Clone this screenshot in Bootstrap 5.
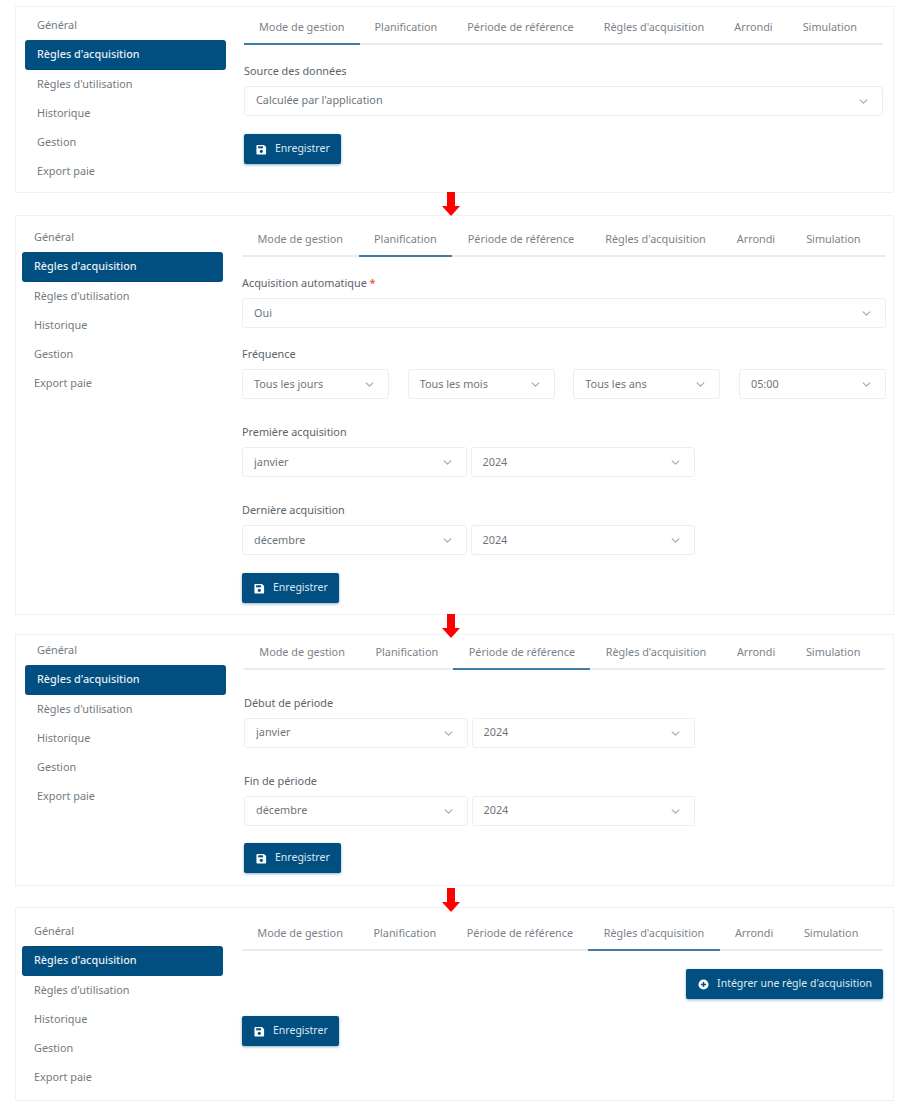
<!DOCTYPE html>
<html lang="fr">
<head>
  <meta charset="UTF-8" />
  <meta name="viewport" content="width=device-width, initial-scale=1" />
  <title>Règles d'acquisition</title>
  <link href="https://cdn.jsdelivr.net/npm/bootstrap@5.3.2/dist/css/bootstrap.min.css" rel="stylesheet" />
  <style>
    body {
      font-family: "Noto Sans", "Liberation Sans", sans-serif;
      font-size: 10.85px;
      color: #6c757d;
      background: #fff;
      padding: 6px 6px 0 15px;
    }

    .panneau {
      display: flex;
      width: 879px;
      border: 1px solid #f0f1f3;
      background: #fff;
    }

    .panneau-1 { padding: 4px 10px 5px 9px; height: 187px; }
    .panneau-2 { padding: 7px 7px 11px 6px; height: 400px; }
    .panneau-3 { padding: 1px 8px 12px 9px; height: 252px; }
    .panneau-4 { padding: 9px 10px 7px 6px; height: 194px; }

    .fleche {
      position: relative;
      z-index: 1;
      width: 879px;
      display: flex;
      justify-content: center;
      align-items: center;
      padding-right: 7px;
    }

    .fleche svg { flex: none; }
    .fleche-22 { height: 22px; padding-bottom: 1px; }
    .fleche-19 { height: 19px; padding-top: 2px; }
    .fleche-21 { height: 21px; padding-top: 6px; }

    .menu-lateral {
      flex: none;
      width: 201px;
      margin-right: 18px;
    }

    .panneau-2 .menu-lateral,
    .panneau-4 .menu-lateral { margin-right: 19px; }

    .menu-lateral .nav-link {
      height: 29.3px;
      line-height: 28.4px;
      padding: 0 12px;
      color: #727a82;
      font-size: 10.85px;
      border-radius: 3px;
    }

    .menu-lateral .nav-link.active {
      background: #014f80;
      color: #e8eef3;
      font-weight: 500;
    }

    .contenu { flex: 1; min-width: 0; }

    .onglets {
      border-bottom: 2px solid #e9ecef;
      flex-wrap: nowrap;
    }

    .onglets .nav-link {
      height: 34px;
      line-height: 32px;
      padding: 0 15.5px;
      margin-bottom: -2px;
      color: #7b828a;
      font-size: 10.85px;
      white-space: nowrap;
      border-bottom: 2px solid transparent;
    }

    .panneau-1 .onglets .nav-link { padding: 0 15px; }
    .panneau-3 .onglets .nav-link,
    .panneau-4 .onglets .nav-link { padding: 0 15.3px; }

    .onglets .nav-link.active {
      color: #7b828a;
      border-bottom-color: #3f7da8;
    }

    .champ-label {
      display: block;
      height: 18px;
      line-height: 18px;
      margin-bottom: 6px;
      color: #5b636b;
      font-size: 10.85px;
    }

    .requis { color: #e3342f; }

    .form-select.liste {
      height: 30px;
      padding: 0 30px 1px 11px;
      font-size: 10.85px;
      color: #6c757d;
      border: 1px solid #eceef1;
      border-radius: 3px;
      background-color: #fff;
      background-image: url("data:image/svg+xml,%3csvg xmlns='http://www.w3.org/2000/svg' viewBox='0 0 16 16'%3e%3cpath fill='none' stroke='%23a3a9af' stroke-linecap='round' stroke-linejoin='round' stroke-width='2' d='m2 5 6 6 6-6'/%3e%3c/svg%3e");
      background-position: right 14px center;
      background-size: 9px 9px;
    }

    .panneau-2 .form-select.liste { padding-bottom: 0; }
    .form-select.frequence { width: 147px; flex: none; }

    .groupe-date { width: 453px; }
    .panneau-3 .groupe-date { width: 451px; }

    .bouton-bleu {
      display: inline-flex;
      align-items: center;
      height: 30px;
      padding: 0 11px 0 12px;
      gap: 8px;
      background: #014f80;
      border: 0;
      border-radius: 2px;
      color: #dfe8ef;
      font-size: 10.5px;
      box-shadow: 0 1px 3px rgba(1, 79, 128, .45);
    }

    .bouton-bleu:hover { background: #014f80; color: #dfe8ef; }

    .haut-17 { padding-top: 17px; }
    .haut-24 { padding-top: 24px; }
    .ecart-17 { margin-top: 17px; }
    .ecart-18 { margin-top: 18px; }
    .ecart-24 { margin-top: 24px; }
  </style>
</head>
<body>

<!-- Étape 1 : mode de gestion -->
<div class="panneau panneau-1">
  <ul class="nav flex-column menu-lateral">
    <li class="nav-item"><a class="nav-link" href="#">Général</a></li>
    <li class="nav-item"><a class="nav-link active" href="#">Règles d'acquisition</a></li>
    <li class="nav-item"><a class="nav-link" href="#">Règles d'utilisation</a></li>
    <li class="nav-item"><a class="nav-link" href="#">Historique</a></li>
    <li class="nav-item"><a class="nav-link" href="#">Gestion</a></li>
    <li class="nav-item"><a class="nav-link" href="#">Export paie</a></li>
  </ul>
  <div class="contenu">
    <ul class="nav onglets">
      <li class="nav-item"><a class="nav-link active" href="#">Mode de gestion</a></li>
      <li class="nav-item"><a class="nav-link" href="#">Planification</a></li>
      <li class="nav-item"><a class="nav-link" href="#">Période de référence</a></li>
      <li class="nav-item"><a class="nav-link" href="#">Règles d'acquisition</a></li>
      <li class="nav-item"><a class="nav-link" href="#">Arrondi</a></li>
      <li class="nav-item"><a class="nav-link" href="#">Simulation</a></li>
    </ul>
    <div class="haut-17">
      <label class="champ-label">Source des données</label>
      <select class="form-select liste"><option>Calculée par l'application</option></select>
    </div>
    <button type="button" class="btn bouton-bleu ecart-18">
      <svg width="11" height="11" viewBox="0 0 12 12"><path fill="#fff" d="M1.3 1h7.4L11 3.3v7.4c0 .4-.3.8-.8.8H1.3c-.4 0-.8-.4-.8-.8V1.8c0-.4.4-.8.8-.8Z"/><path fill="#014f80" d="M2.3 2.5h5.4v2.2H2.3Z"/><circle fill="#014f80" cx="5.8" cy="8" r="1.7"/></svg>
      Enregistrer
    </button>
  </div>
</div>

<div class="fleche fleche-22">
  <svg width="18" height="24" viewBox="0 0 18 24"><path fill="#f00" d="M5 0h8v14h5l-9 10-9-10h5Z"/></svg>
</div>

<!-- Étape 2 : planification -->
<div class="panneau panneau-2">
  <ul class="nav flex-column menu-lateral">
    <li class="nav-item"><a class="nav-link" href="#">Général</a></li>
    <li class="nav-item"><a class="nav-link active" href="#">Règles d'acquisition</a></li>
    <li class="nav-item"><a class="nav-link" href="#">Règles d'utilisation</a></li>
    <li class="nav-item"><a class="nav-link" href="#">Historique</a></li>
    <li class="nav-item"><a class="nav-link" href="#">Gestion</a></li>
    <li class="nav-item"><a class="nav-link" href="#">Export paie</a></li>
  </ul>
  <div class="contenu">
    <ul class="nav onglets">
      <li class="nav-item"><a class="nav-link" href="#">Mode de gestion</a></li>
      <li class="nav-item"><a class="nav-link active" href="#">Planification</a></li>
      <li class="nav-item"><a class="nav-link" href="#">Période de référence</a></li>
      <li class="nav-item"><a class="nav-link" href="#">Règles d'acquisition</a></li>
      <li class="nav-item"><a class="nav-link" href="#">Arrondi</a></li>
      <li class="nav-item"><a class="nav-link" href="#">Simulation</a></li>
    </ul>
    <div class="haut-17">
      <label class="champ-label">Acquisition automatique <span class="requis">*</span></label>
      <select class="form-select liste"><option>Oui</option></select>
    </div>
    <div class="ecart-17">
      <label class="champ-label">Fréquence</label>
      <div class="d-flex justify-content-between">
        <select class="form-select liste frequence"><option>Tous les jours</option></select>
        <select class="form-select liste frequence"><option>Tous les mois</option></select>
        <select class="form-select liste frequence"><option>Tous les ans</option></select>
        <select class="form-select liste frequence"><option>05:00</option></select>
      </div>
    </div>
    <div class="ecart-24">
      <label class="champ-label">Première acquisition</label>
      <div class="d-flex gap-1 groupe-date">
        <select class="form-select liste"><option>janvier</option></select>
        <select class="form-select liste"><option>2024</option></select>
      </div>
    </div>
    <div class="ecart-24">
      <label class="champ-label">Dernière acquisition</label>
      <div class="d-flex gap-1 groupe-date">
        <select class="form-select liste"><option>décembre</option></select>
        <select class="form-select liste"><option>2024</option></select>
      </div>
    </div>
    <button type="button" class="btn bouton-bleu ecart-18">
      <svg width="11" height="11" viewBox="0 0 12 12"><path fill="#fff" d="M1.3 1h7.4L11 3.3v7.4c0 .4-.3.8-.8.8H1.3c-.4 0-.8-.4-.8-.8V1.8c0-.4.4-.8.8-.8Z"/><path fill="#014f80" d="M2.3 2.5h5.4v2.2H2.3Z"/><circle fill="#014f80" cx="5.8" cy="8" r="1.7"/></svg>
      Enregistrer
    </button>
  </div>
</div>

<div class="fleche fleche-19">
  <svg width="18" height="24" viewBox="0 0 18 24"><path fill="#f00" d="M5 0h8v14h5l-9 10-9-10h5Z"/></svg>
</div>

<!-- Étape 3 : période de référence -->
<div class="panneau panneau-3">
  <ul class="nav flex-column menu-lateral">
    <li class="nav-item"><a class="nav-link" href="#">Général</a></li>
    <li class="nav-item"><a class="nav-link active" href="#">Règles d'acquisition</a></li>
    <li class="nav-item"><a class="nav-link" href="#">Règles d'utilisation</a></li>
    <li class="nav-item"><a class="nav-link" href="#">Historique</a></li>
    <li class="nav-item"><a class="nav-link" href="#">Gestion</a></li>
    <li class="nav-item"><a class="nav-link" href="#">Export paie</a></li>
  </ul>
  <div class="contenu">
    <ul class="nav onglets">
      <li class="nav-item"><a class="nav-link" href="#">Mode de gestion</a></li>
      <li class="nav-item"><a class="nav-link" href="#">Planification</a></li>
      <li class="nav-item"><a class="nav-link active" href="#">Période de référence</a></li>
      <li class="nav-item"><a class="nav-link" href="#">Règles d'acquisition</a></li>
      <li class="nav-item"><a class="nav-link" href="#">Arrondi</a></li>
      <li class="nav-item"><a class="nav-link" href="#">Simulation</a></li>
    </ul>
    <div class="haut-24">
      <label class="champ-label">Début de période</label>
      <div class="d-flex gap-1 groupe-date">
        <select class="form-select liste"><option>janvier</option></select>
        <select class="form-select liste"><option>2024</option></select>
      </div>
    </div>
    <div class="ecart-24">
      <label class="champ-label">Fin de période</label>
      <div class="d-flex gap-1 groupe-date">
        <select class="form-select liste"><option>décembre</option></select>
        <select class="form-select liste"><option>2024</option></select>
      </div>
    </div>
    <button type="button" class="btn bouton-bleu ecart-17">
      <svg width="11" height="11" viewBox="0 0 12 12"><path fill="#fff" d="M1.3 1h7.4L11 3.3v7.4c0 .4-.3.8-.8.8H1.3c-.4 0-.8-.4-.8-.8V1.8c0-.4.4-.8.8-.8Z"/><path fill="#014f80" d="M2.3 2.5h5.4v2.2H2.3Z"/><circle fill="#014f80" cx="5.8" cy="8" r="1.7"/></svg>
      Enregistrer
    </button>
  </div>
</div>

<div class="fleche fleche-21">
  <svg width="18" height="24" viewBox="0 0 18 24"><path fill="#f00" d="M5 0h8v14h5l-9 10-9-10h5Z"/></svg>
</div>

<!-- Étape 4 : règles d'acquisition -->
<div class="panneau panneau-4">
  <ul class="nav flex-column menu-lateral">
    <li class="nav-item"><a class="nav-link" href="#">Général</a></li>
    <li class="nav-item"><a class="nav-link active" href="#">Règles d'acquisition</a></li>
    <li class="nav-item"><a class="nav-link" href="#">Règles d'utilisation</a></li>
    <li class="nav-item"><a class="nav-link" href="#">Historique</a></li>
    <li class="nav-item"><a class="nav-link" href="#">Gestion</a></li>
    <li class="nav-item"><a class="nav-link" href="#">Export paie</a></li>
  </ul>
  <div class="contenu">
    <ul class="nav onglets">
      <li class="nav-item"><a class="nav-link" href="#">Mode de gestion</a></li>
      <li class="nav-item"><a class="nav-link" href="#">Planification</a></li>
      <li class="nav-item"><a class="nav-link" href="#">Période de référence</a></li>
      <li class="nav-item"><a class="nav-link active" href="#">Règles d'acquisition</a></li>
      <li class="nav-item"><a class="nav-link" href="#">Arrondi</a></li>
      <li class="nav-item"><a class="nav-link" href="#">Simulation</a></li>
    </ul>
    <div class="d-flex justify-content-end ecart-18">
      <button type="button" class="btn bouton-bleu">
        <svg width="11" height="11" viewBox="0 0 12 12"><circle fill="#fff" cx="6" cy="6" r="5.5"/><path fill="none" stroke="#014f80" stroke-width="1.6" d="M6 3.2v5.6M3.2 6h5.6"/></svg>
        Intégrer une règle d'acquisition
      </button>
    </div>
    <button type="button" class="btn bouton-bleu ecart-17">
      <svg width="11" height="11" viewBox="0 0 12 12"><path fill="#fff" d="M1.3 1h7.4L11 3.3v7.4c0 .4-.3.8-.8.8H1.3c-.4 0-.8-.4-.8-.8V1.8c0-.4.4-.8.8-.8Z"/><path fill="#014f80" d="M2.3 2.5h5.4v2.2H2.3Z"/><circle fill="#014f80" cx="5.8" cy="8" r="1.7"/></svg>
      Enregistrer
    </button>
  </div>
</div>

<script src="https://cdn.jsdelivr.net/npm/bootstrap@5.3.2/dist/js/bootstrap.bundle.min.js"></script>
</body>
</html>
